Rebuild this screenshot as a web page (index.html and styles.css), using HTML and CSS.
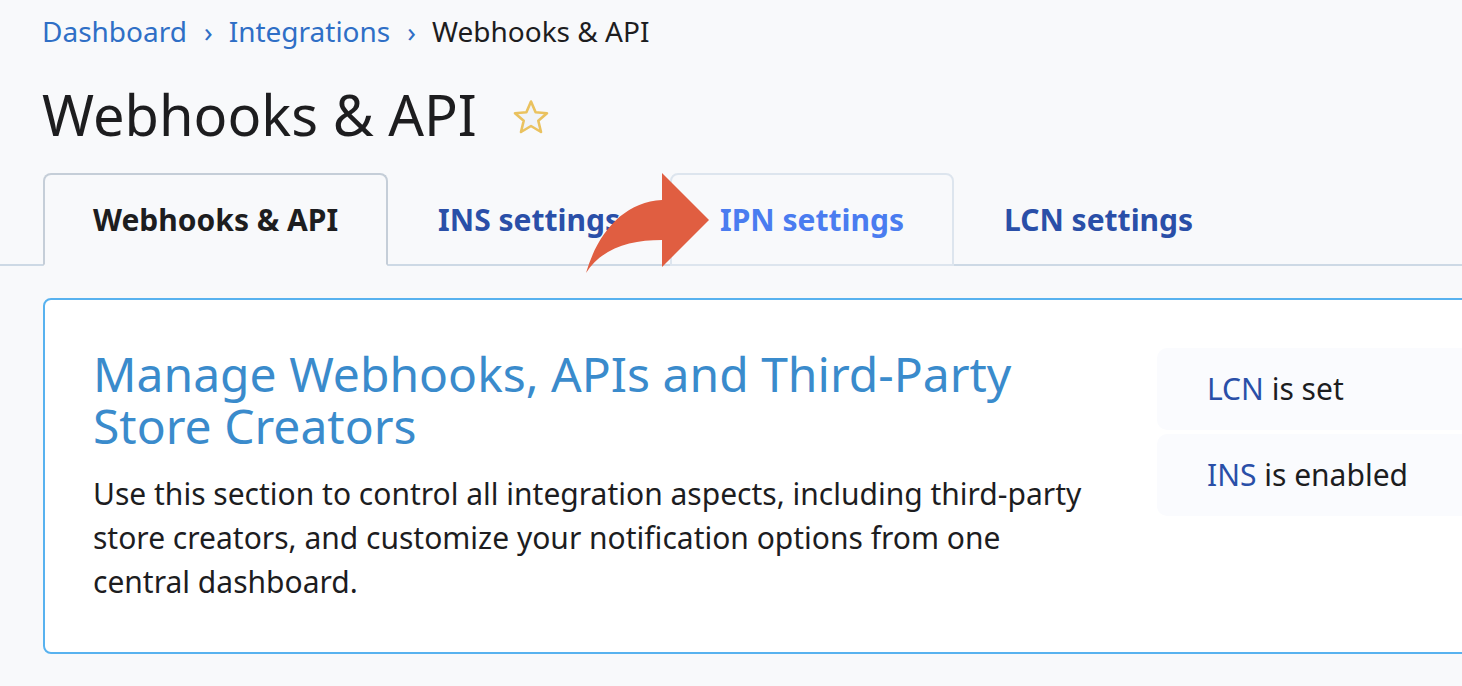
FILE: index.html
```html
<!DOCTYPE html>
<html lang="en">
<head>
    <meta charset="UTF-8">
    <meta name="viewport" content="width=device-width, initial-scale=1.0">
    <title>Webhooks & API</title>
    <link rel="stylesheet" href="styles.css">
</head>
<body>

    <div class="page">
        <nav class="breadcrumb">
            <a href="#">Dashboard</a>
            <span class="sep">&rsaquo;</span>
            <a href="#">Integrations</a>
            <span class="sep">&rsaquo;</span>
            <span class="current">Webhooks &amp; API</span>
        </nav>

        <div class="title-row">
            <h1>Webhooks &amp; API</h1>
            <svg class="star" width="38" height="36" viewBox="0 0 38 36">
                <path d="M19 2.5 L23.6 13.2 L35 14.2 L26.3 21.8 L29 33 L19 27 L9 33 L11.7 21.8 L3 14.2 L14.4 13.2 Z"
                      fill="#f0f3f8" stroke="#eac25f" stroke-width="2.6" stroke-linejoin="round"/>
            </svg>
        </div>

        <div class="tabs">
            <a href="#" class="tab active">Webhooks &amp; API</a>
            <a href="#" class="tab">INS settings</a>
            <a href="#" class="tab hover">IPN settings</a>
            <a href="#" class="tab">LCN settings</a>

            <!-- callout arrow pointing at the IPN tab -->
            <svg class="arrow" width="140" height="110" viewBox="0 0 140 110">
                <path d="M6 103 C18 62 44 32 82 30 L82 3 L129 50 L82 97 L82 70 C50 70 22 78 6 103 Z" fill="#e05e41"/>
            </svg>
        </div>

        <div class="card">
            <div class="card-main">
                <h2>Manage Webhooks, APIs and Third-Party Store Creators</h2>
                <p>Use this section to control all integration aspects, including third-party store creators, and customize your notification options from one central dashboard.</p>
            </div>
            <div class="card-side">
                <div class="status"><a href="#">LCN</a> is set</div>
                <div class="status"><a href="#">INS</a> is enabled</div>
            </div>
        </div>
    </div>

</body>
</html>
```

FILE: styles.css
```css
body {
    margin: 0;
    font-family: "Noto Sans", "Open Sans", sans-serif;
    background-color: #f8f9fb;
    color: #1d1d1f;
    overflow: hidden;
}

a {
    text-decoration: none;
}

.page {
    padding: 12px 0 0 42px;
}

.breadcrumb {
    display: flex;
    align-items: center;
    font-size: 28px;
    line-height: 38px;
}

.breadcrumb a {
    color: #2f6fc6;
}

.breadcrumb .sep {
    color: #2f6fc6;
    margin: 0 16px 0 17px;
    font-size: 28px;
}

.breadcrumb .current {
    color: #1d1d1f;
}

.title-row {
    display: flex;
    align-items: center;
    gap: 35px;
    margin-top: 32px;
}

h1 {
    margin: 0;
    font-size: 56px;
    font-weight: 400;
    line-height: 64px;
    color: #1d1d1f;
}

.star {
    margin-top: 6px;
}

.tabs {
    position: relative;
    display: flex;
    margin: 27px 0 0 -42px;
    padding-left: 43px;
    border-bottom: 2px solid #cdd9e5;
}

.tab {
    padding: 25px 48px 24px;
    margin-bottom: -2px;
    font-size: 30px;
    line-height: 40px;
    font-weight: 700;
    color: #2a4fa8;
    border: 2px solid transparent;
    border-radius: 8px 8px 0 0;
}

.tab.active {
    color: #1d1d1f;
    border-color: #c5ced8;
    border-bottom-color: #f8f9fb;
}

.tab.hover {
    color: #4a7cf0;
    border-color: #dde5ee;
}

.arrow {
    position: absolute;
    left: 580px;
    top: -3px;
}

.card {
    display: flex;
    gap: 64px;
    margin: 32px -200px 0 1px;
    padding: 48px;
    background: #fff;
    border: 2px solid #58b2ef;
    border-radius: 8px;
}

.card-main {
    flex: 0 0 1000px;
}

h2 {
    margin: 0;
    font-size: 48px;
    font-weight: 400;
    line-height: 52px;
    color: #3a8bcc;
}

.card-main p {
    margin: 20px 0 0;
    font-size: 30px;
    line-height: 44px;
    color: #1d1d1f;
}

.card-side {
    flex: 1;
    display: flex;
    flex-direction: column;
    gap: 4px;
}

.status {
    padding: 21px 50px 21px;
    font-size: 30px;
    line-height: 40px;
    background: #fafbfe;
    border-radius: 10px;
}

.status a {
    color: #2a4fa8;
}
```
